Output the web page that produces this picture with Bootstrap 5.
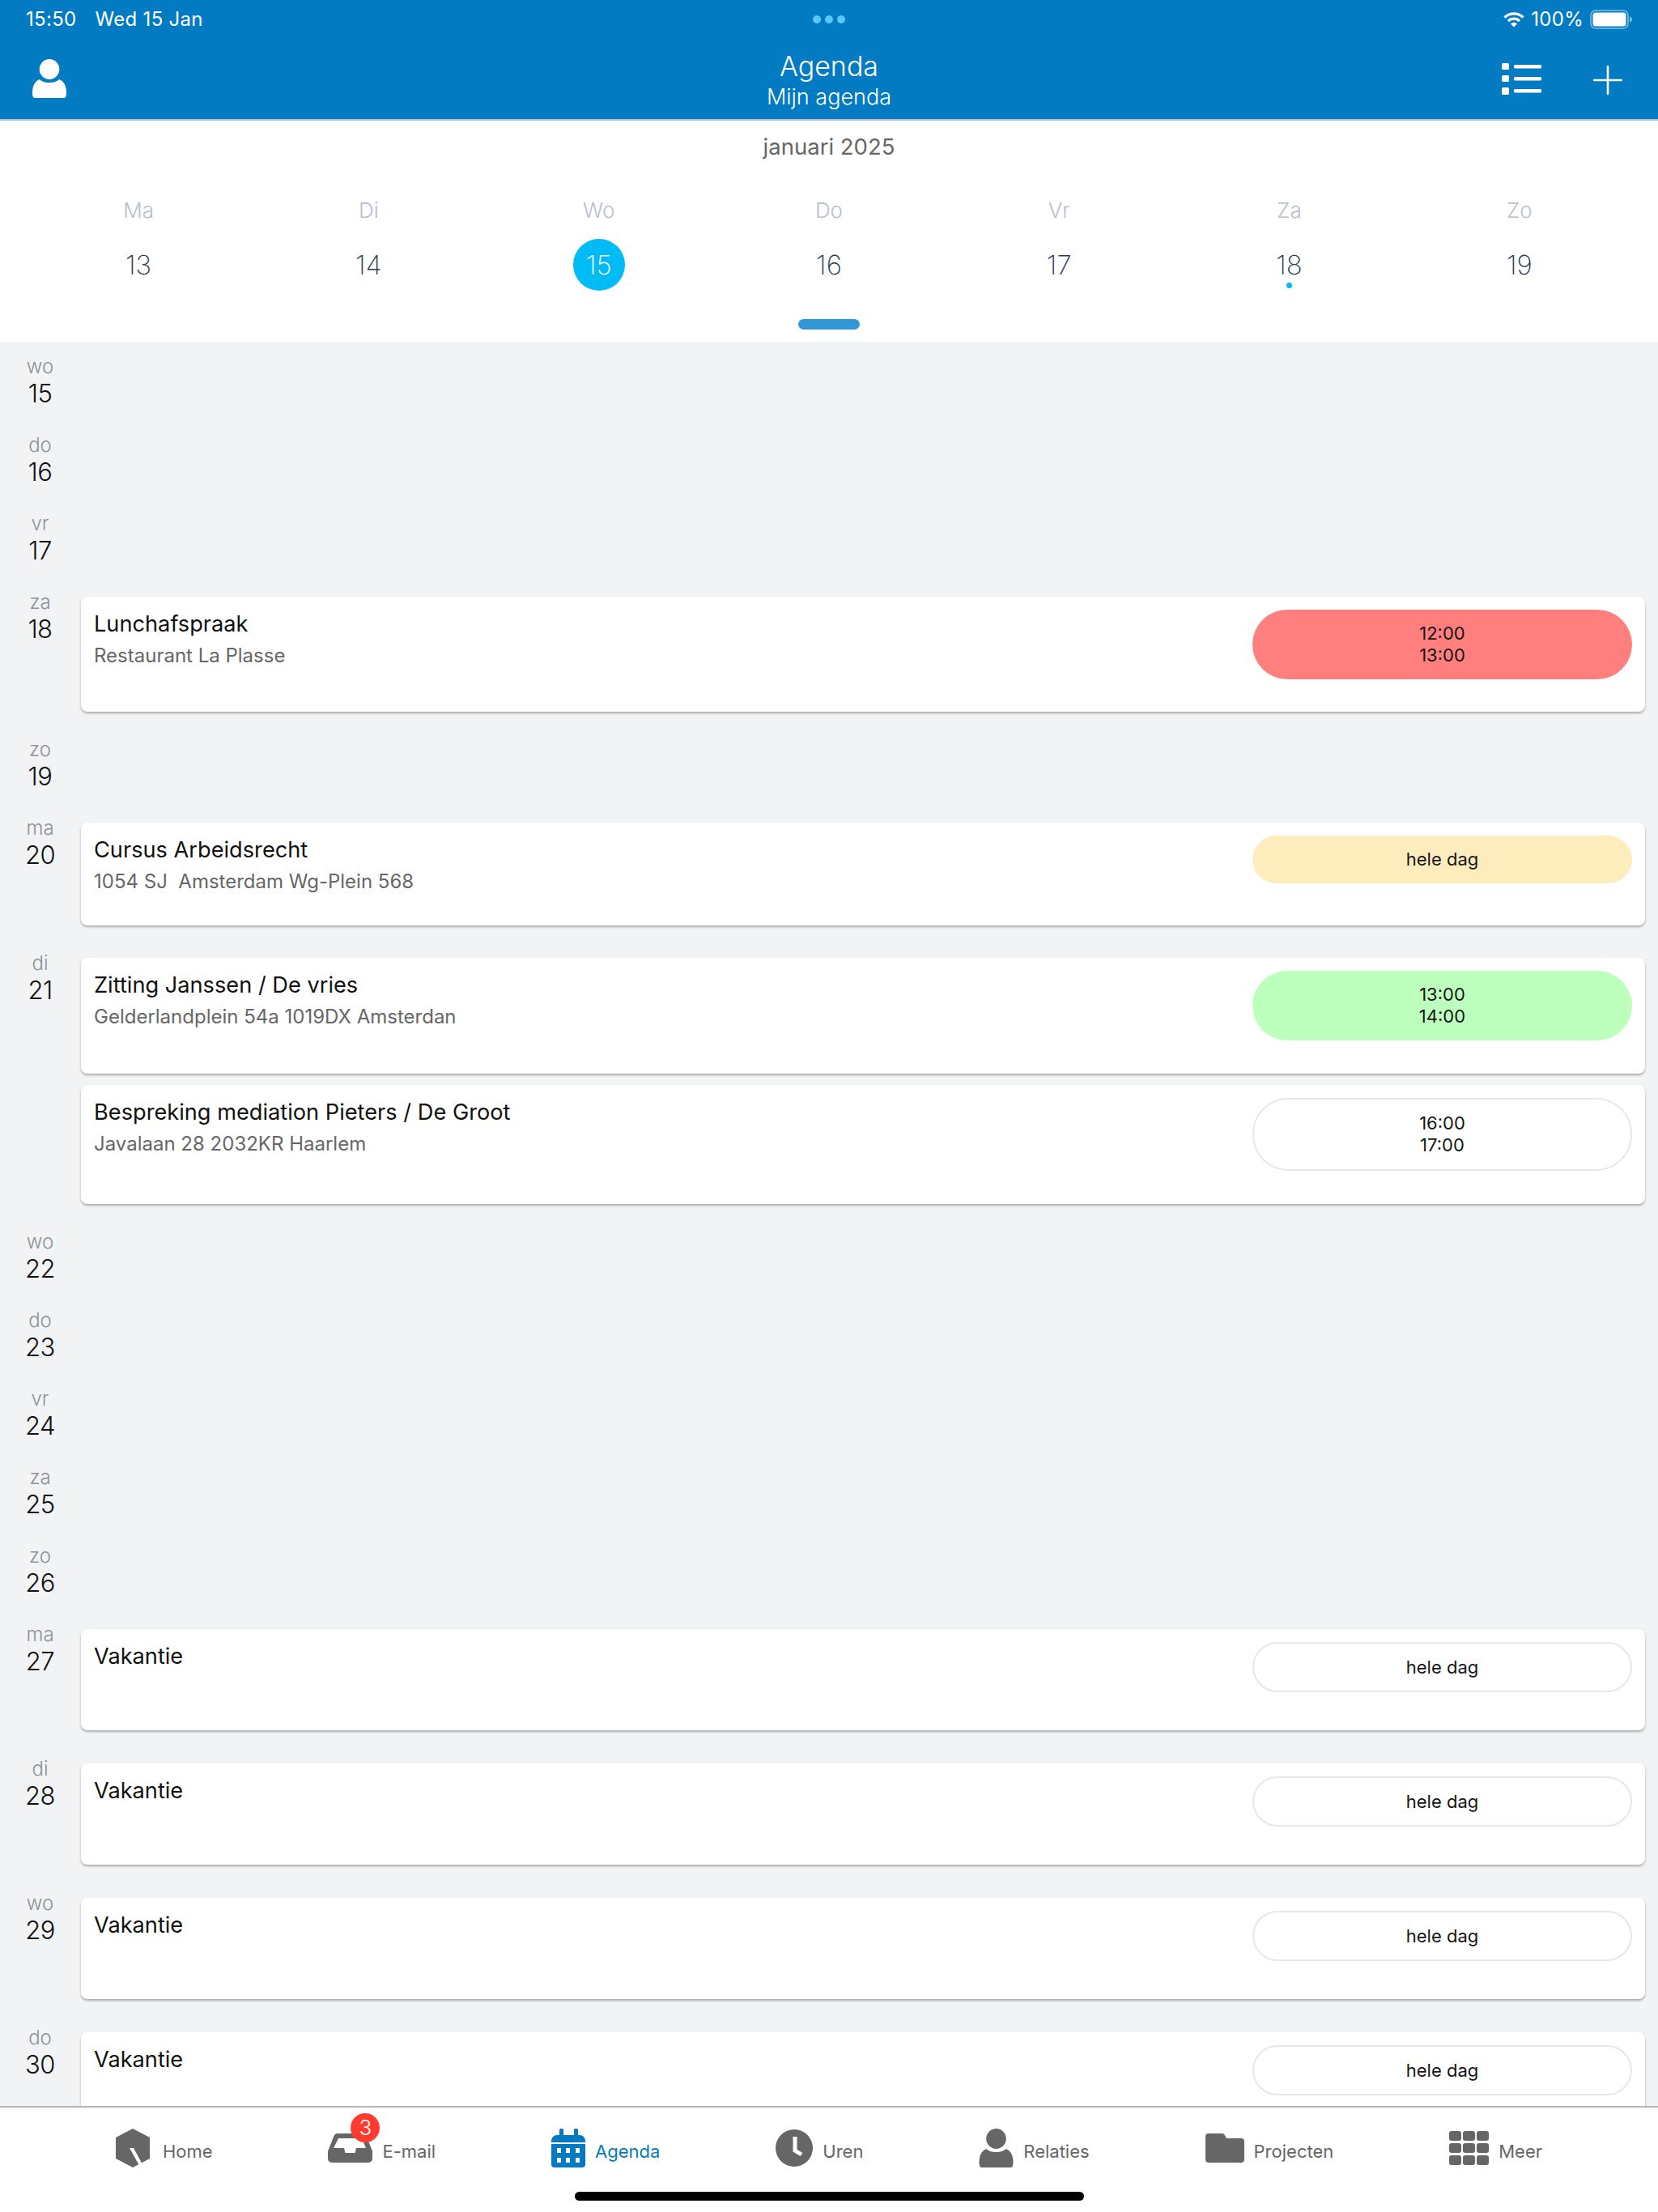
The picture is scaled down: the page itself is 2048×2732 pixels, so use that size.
<!DOCTYPE html>
<html lang="nl">
<head>
<meta charset="utf-8">
<title>Agenda</title>
<link href="https://cdn.jsdelivr.net/npm/bootstrap@5.3.0/dist/css/bootstrap.min.css" rel="stylesheet">
<style>
html,body{margin:0;background:#fff}
body{font-family:Inter,"Liberation Sans",sans-serif;color:#111}
.app-shell{width:2048px;height:2732px;overflow:hidden}
.top-bar{background:#027bc2;color:#fff;height:149px;border-bottom:2px solid #b9c4cb}
.status-row{height:48px;padding:0 32px;font-size:24px;letter-spacing:.3px;font-weight:400}
.status-gap{gap:23px}
.ipad-dots{gap:5px}
.ipad-dots i{display:block;width:10px;height:10px;border-radius:50%;background:#5ac8fa}
.title-row{height:99px;padding:0 44px 0 40px}
.title-main{font-size:34px;font-weight:300;line-height:40px}
.title-sub{font-size:27px;font-weight:300;line-height:35px}
.title-block{left:0;right:0;top:14px}
.title-actions{gap:64px}
.title-user{margin-top:25px}
.title-list{margin-top:30px}
.title-plus{margin-top:33px}
.cal-panel{height:273px;background:#fff}
.month-label{font-size:27.500px;color:#666;font-weight:400;line-height:36px;padding-top:14px}
.week-grid{padding:0 29px;margin-top:43px}
.week-col{width:14.2857%}
.week-name{font-size:26px;font-weight:300;color:#b7c0ce;line-height:36px}
.week-num{font-size:33px;font-weight:250;color:#2c3e50;width:64px;height:64px;line-height:64px;margin-top:17px}
.week-today{background:#00bbf5;color:#fff;border-radius:50%}
.week-dot{width:7px;height:7px;background:#00bbf5;border-radius:50%;left:50%;margin-left:-4px;bottom:3px}
.pull-handle{width:76px;height:13px;background:#3498d8;border-radius:7px;margin-top:35px}
.list-pane{height:2179px;overflow:hidden;background:#f2f3f5}
.day-row{min-height:97px}
.day-side{width:100px;padding:16px 1px 0 0;text-align:center;flex:none}
.day-name{font-size:24px;color:#8b9196;line-height:30px;font-weight:300}
.day-num{font-size:31px;color:#111;line-height:36px;font-weight:300;letter-spacing:-.5px}
.day-events{padding:24px 16px 16px 0;gap:14px}
.day-events-wide{padding-bottom:17px}
.event-card{border:0;border-radius:8px;background:#fff;box-shadow:0 2px 3px rgba(0,0,0,.3);padding:16px}
.ev-a{height:142px}.ev-b{height:127px}.ev-c{height:143px}.ev-d{height:147px}.ev-e{height:125px}
.ev-title{font-size:27.200px;line-height:34px;color:#111;font-weight:400;margin-top:1px}
.ev-sub{font-size:24px;line-height:30px;color:#666;margin-top:7px;white-space:pre}
.time-pill{width:469px;flex:none;font-size:22px;line-height:27px;color:#151515;text-align:center;border-radius:44px}
.pill-two{height:86px}.pill-one{height:59px}.pill-out{background:#fff;border:2px solid #e6e7e9}
.pill-red{background:#ff7f7f}.pill-yellow{background:#fdedbd}.pill-green{background:#bdffbc}
.pill-four{height:90px}.pill-vak{height:62px}
.tab-bar{height:131px;background:#fff;border-top:2px solid #b5b5b5}
.tab-row{height:100px}
.tab-item{gap:12px;color:#666;font-size:22px;font-weight:400}
.tab-wide{gap:16px}
.tab-item span.tab-text{margin-top:8px}
.tab-active{color:#027bc2}
.tab-badge{width:36px;height:36px;top:-25px;left:28px;background:#ff3b30;color:#fff;border-radius:50%;font-size:26px;font-weight:300;line-height:36px;text-align:center}
.home-bar{width:629px;height:11px;background:#000;border-radius:6px;margin-top:4px}
</style>
</head>
<body>
<div class="app-shell d-flex flex-column">
  <header class="top-bar">
    <div class="status-row d-flex align-items-center justify-content-between position-relative">
      <div class="d-flex status-gap"><span>15:50</span><span>Wed 15 Jan</span></div>
      <div class="ipad-dots d-flex position-absolute top-50 start-50 translate-middle"><i></i><i></i><i></i></div>
      <div class="d-flex align-items-center gap-2">
        <svg width="26" height="20" viewBox="0 0 26 20" fill="none" stroke="#fff" stroke-width="3.2"><path d="M1.500 7.500a16.500 16.500 0 0 1 23 0"/><path d="M6 12a10 10 0 0 1 14 0"/><path d="M13 19.500 9 15.200a6 6 0 0 1 8 0z" fill="#fff" stroke="none"/></svg>
        <span>100%</span>
        <svg width="52" height="24" viewBox="0 0 52 24"><rect x="1" y="1" width="46" height="22" rx="6" fill="none" stroke="#fff" stroke-opacity=".5" stroke-width="1.600"/><rect x="3.500" y="3.500" width="41" height="17" rx="3.500" fill="#fff"/><path d="M49 8.500c2 .5 3 2 3 3.500s-1 3-3 3.500z" fill="#fff" fill-opacity=".5"/></svg>
      </div>
    </div>
    <div class="title-row d-flex align-items-start justify-content-between position-relative">
      <svg class="title-user" width="42" height="48" viewBox="0 0 42 48" fill="#fff" aria-label="Profiel"><ellipse cx="21" cy="12.500" rx="12.300" ry="12.500"/><path d="M0 42c0-9 3-15 9-17 2 2.500 7 4 12 4s10-1.500 12-4c6 2 9 8 9 17 0 4-1 6-3 6H3c-2 0-3-2-3-6z"/></svg>
      <div class="title-block position-absolute text-center"><div class="title-main">Agenda</div><div class="title-sub">Mijn agenda</div></div>
      <div class="title-actions d-flex align-items-start ms-auto">
        <svg class="title-list" width="49" height="39" viewBox="0 0 49 39" fill="#fff"><rect width="9" height="8" rx="1.500"/><rect y="15" width="9" height="8" rx="1.500"/><rect y="30" width="9" height="9" rx="1.500"/><rect x="15" y="2" width="34" height="4.500" rx="1.500"/><rect x="15" y="17" width="34" height="4.500" rx="1.500"/><rect x="15" y="32" width="34" height="4.500" rx="1.500"/></svg>
        <svg class="title-plus" width="36" height="36" viewBox="0 0 36 36" fill="#fff"><rect x="16.700" width="2.600" height="36" rx="1.300"/><rect y="16.700" width="36" height="2.600" rx="1.300"/></svg>
      </div>
    </div>
  </header>

  <section class="cal-panel">
    <div class="month-label text-center">januari 2025</div>
    <div class="week-grid d-flex">
      <div class="week-col d-flex flex-column align-items-center"><div class="week-name">Ma</div><div class="week-num text-center">13</div></div>
      <div class="week-col d-flex flex-column align-items-center"><div class="week-name">Di</div><div class="week-num text-center">14</div></div>
      <div class="week-col d-flex flex-column align-items-center"><div class="week-name">Wo</div><div class="week-num week-today text-center">15</div></div>
      <div class="week-col d-flex flex-column align-items-center"><div class="week-name">Do</div><div class="week-num text-center">16</div></div>
      <div class="week-col d-flex flex-column align-items-center"><div class="week-name">Vr</div><div class="week-num text-center">17</div></div>
      <div class="week-col d-flex flex-column align-items-center"><div class="week-name">Za</div><div class="week-num text-center position-relative">18<span class="week-dot position-absolute"></span></div></div>
      <div class="week-col d-flex flex-column align-items-center"><div class="week-name">Zo</div><div class="week-num text-center">19</div></div>
    </div>
    <div class="pull-handle mx-auto"></div>
  </section>

  <main class="list-pane">
    <div class="day-row d-flex"><div class="day-side"><div class="day-name">wo</div><div class="day-num">15</div></div></div>
    <div class="day-row d-flex"><div class="day-side"><div class="day-name">do</div><div class="day-num">16</div></div></div>
    <div class="day-row d-flex"><div class="day-side"><div class="day-name">vr</div><div class="day-num">17</div></div></div>

    <div class="day-row d-flex"><div class="day-side"><div class="day-name">za</div><div class="day-num">18</div></div>
      <div class="day-events flex-grow-1 d-flex flex-column">
        <div class="card event-card ev-a flex-row justify-content-between"><div><div class="ev-title">Lunchafspraak</div><div class="ev-sub">Restaurant La Plasse</div></div><div class="time-pill pill-two pill-red d-flex align-items-center justify-content-center">12:00<br>13:00</div></div>
      </div>
    </div>

    <div class="day-row d-flex"><div class="day-side"><div class="day-name">zo</div><div class="day-num">19</div></div></div>

    <div class="day-row d-flex"><div class="day-side"><div class="day-name">ma</div><div class="day-num">20</div></div>
      <div class="day-events flex-grow-1 d-flex flex-column">
        <div class="card event-card ev-b flex-row justify-content-between"><div><div class="ev-title">Cursus Arbeidsrecht</div><div class="ev-sub">1054 SJ  Amsterdam Wg-Plein 568</div></div><div class="time-pill pill-one pill-yellow d-flex align-items-center justify-content-center">hele dag</div></div>
      </div>
    </div>

    <div class="day-row d-flex"><div class="day-side"><div class="day-name">di</div><div class="day-num">21</div></div>
      <div class="day-events flex-grow-1 d-flex flex-column">
        <div class="card event-card ev-c flex-row justify-content-between"><div><div class="ev-title">Zitting Janssen / De vries</div><div class="ev-sub">Gelderlandplein 54a 1019DX Amsterdan</div></div><div class="time-pill pill-two pill-green d-flex align-items-center justify-content-center">13:00<br>14:00</div></div>
        <div class="card event-card ev-d flex-row justify-content-between"><div><div class="ev-title">Bespreking mediation Pieters / De Groot</div><div class="ev-sub">Javalaan 28 2032KR Haarlem</div></div><div class="time-pill pill-four pill-out d-flex align-items-center justify-content-center">16:00<br>17:00</div></div>
      </div>
    </div>

    <div class="day-row d-flex"><div class="day-side"><div class="day-name">wo</div><div class="day-num">22</div></div></div>
    <div class="day-row d-flex"><div class="day-side"><div class="day-name">do</div><div class="day-num">23</div></div></div>
    <div class="day-row d-flex"><div class="day-side"><div class="day-name">vr</div><div class="day-num">24</div></div></div>
    <div class="day-row d-flex"><div class="day-side"><div class="day-name">za</div><div class="day-num">25</div></div></div>
    <div class="day-row d-flex"><div class="day-side"><div class="day-name">zo</div><div class="day-num">26</div></div></div>

    <div class="day-row d-flex"><div class="day-side"><div class="day-name">ma</div><div class="day-num">27</div></div><div class="day-events day-events-wide flex-grow-1 d-flex flex-column"><div class="card event-card ev-e flex-row justify-content-between"><div class="ev-title">Vakantie</div><div class="time-pill pill-vak pill-out d-flex align-items-center justify-content-center">hele dag</div></div></div></div>
    <div class="day-row d-flex"><div class="day-side"><div class="day-name">di</div><div class="day-num">28</div></div><div class="day-events day-events-wide flex-grow-1 d-flex flex-column"><div class="card event-card ev-e flex-row justify-content-between"><div class="ev-title">Vakantie</div><div class="time-pill pill-vak pill-out d-flex align-items-center justify-content-center">hele dag</div></div></div></div>
    <div class="day-row d-flex"><div class="day-side"><div class="day-name">wo</div><div class="day-num">29</div></div><div class="day-events day-events-wide flex-grow-1 d-flex flex-column"><div class="card event-card ev-e flex-row justify-content-between"><div class="ev-title">Vakantie</div><div class="time-pill pill-vak pill-out d-flex align-items-center justify-content-center">hele dag</div></div></div></div>
    <div class="day-row d-flex"><div class="day-side"><div class="day-name">do</div><div class="day-num">30</div></div><div class="day-events day-events-wide flex-grow-1 d-flex flex-column"><div class="card event-card ev-e flex-row justify-content-between"><div class="ev-title">Vakantie</div><div class="time-pill pill-vak pill-out d-flex align-items-center justify-content-center">hele dag</div></div></div></div>
  </main>

  <nav class="tab-bar">
    <div class="tab-row d-flex justify-content-evenly align-items-center">
      <div class="tab-item tab-wide d-flex align-items-center"><svg width="42" height="48" viewBox="0 0 42 48"><path fill="#666" d="M21 0 42 11v26L21 48 0 37V11z"/><path fill="#fff" d="M17 24h5l14 26-5-1z"/></svg><span class="tab-text">Home</span></div>
      <div class="tab-item d-flex align-items-center"><div class="position-relative d-flex"><svg width="55" height="36" viewBox="0 0 55 36"><path fill="#666" d="M12 0h31a5 5 0 0 1 4.500 3L55 22v9a5 5 0 0 1-5 5H5a5 5 0 0 1-5-5v-9L7.500 3A5 5 0 0 1 12 0z"/><path fill="#fff" d="M13 6h29l5 12H35l-1.500 6H21.500L20 18H7z"/></svg><span class="tab-badge position-absolute">3</span></div><span class="tab-text">E-mail</span></div>
      <div class="tab-item tab-active d-flex align-items-center"><svg width="42" height="48" viewBox="0 0 42 48"><g fill="#027bc2"><rect x="10" width="5" height="10" rx="1.500"/><rect x="28" width="5" height="10" rx="1.500"/><path d="M0 15a7 7 0 0 1 7-7h28a7 7 0 0 1 7 7v2H0z"/><path d="M0 19h42v25a4 4 0 0 1-4 4H4a4 4 0 0 1-4-4z"/></g><g fill="#fff"><rect x="7" y="24" width="5" height="6"/><rect x="18" y="24" width="5" height="6"/><rect x="30" y="24" width="5" height="6"/><rect x="7" y="36" width="5" height="6"/><rect x="18" y="36" width="5" height="6"/><rect x="30" y="36" width="5" height="6"/></g></svg><span class="tab-text">Agenda</span></div>
      <div class="tab-item d-flex align-items-center"><svg width="46" height="46" viewBox="0 0 46 46"><circle cx="23" cy="23" r="23" fill="#666"/><path d="M24 9v17l8 5" fill="none" stroke="#fff" stroke-width="5"/></svg><span class="tab-text">Uren</span></div>
      <div class="tab-item d-flex align-items-center"><svg width="43" height="48" viewBox="0 0 42 48" fill="#666"><ellipse cx="21" cy="12.500" rx="12.300" ry="12.500"/><path d="M0 42c0-9 3-15 9-17 2 2.500 7 4 12 4s10-1.500 12-4c6 2 9 8 9 17 0 4-1 6-3 6H3c-2 0-3-2-3-6z"/></svg><span class="tab-text">Relaties</span></div>
      <div class="tab-item d-flex align-items-center"><svg width="48" height="36" viewBox="0 0 48 36"><path fill="#666" d="M4 0h17a3 3 0 0 1 2.500 1.500L26 6h18a4 4 0 0 1 4 4v22a4 4 0 0 1-4 4H4a4 4 0 0 1-4-4V4a4 4 0 0 1 4-4z"/></svg><span class="tab-text">Projecten</span></div>
      <div class="tab-item d-flex align-items-center"><svg width="49" height="42" viewBox="0 0 49 42" fill="#666"><rect width="15" height="12" rx="3"/><rect x="17" width="15" height="12" rx="3"/><rect x="34" width="15" height="12" rx="3"/><rect y="15" width="15" height="12" rx="3"/><rect x="17" y="15" width="15" height="12" rx="3"/><rect x="34" y="15" width="15" height="12" rx="3"/><rect y="30" width="15" height="12" rx="3"/><rect x="17" y="30" width="15" height="12" rx="3"/><rect x="34" y="30" width="15" height="12" rx="3"/></svg><span class="tab-text">Meer</span></div>
    </div>
    <div class="home-bar mx-auto"></div>
  </nav>
</div>
<script src="https://cdn.jsdelivr.net/npm/bootstrap@5.3.0/dist/js/bootstrap.bundle.min.js"></script>
</body>
</html>
